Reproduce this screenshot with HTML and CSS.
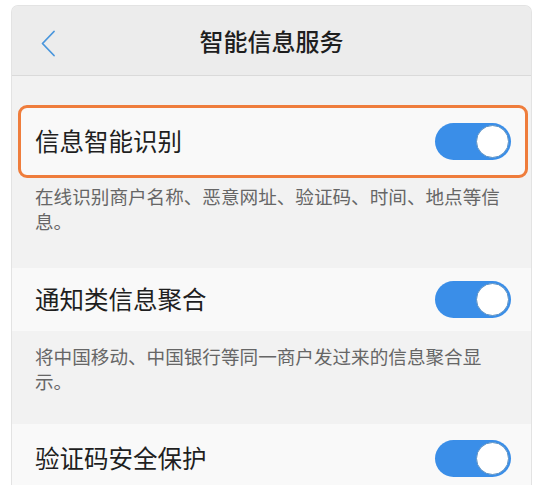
FILE: index.html
```html
<!DOCTYPE html>
<html lang="zh-CN">
<head>
<meta charset="utf-8">
<title>智能信息服务</title>
<link rel="stylesheet" href="styles.css">
</head>
<body>
<div class="card">
  <div class="header">
    <svg class="back" width="16" height="27" viewBox="0 0 16 27"><polyline points="14,1.5 2.5,13.5 14,25.5" fill="none" stroke="#4a96dc" stroke-width="1.8" stroke-linecap="round" stroke-linejoin="round"/></svg>
    <div class="title">智能信息服务</div>
  </div>
  <div class="content">
    <div class="row row-hl">
      <span class="label">信息智能识别</span>
      <span class="toggle"><span class="knob"></span></span>
    </div>
    <div class="desc desc-first">在线识别商户名称、恶意网址、验证码、时间、地点等信息。</div>
    <div class="row">
      <span class="label">通知类信息聚合</span>
      <span class="toggle"><span class="knob"></span></span>
    </div>
    <div class="desc">将中国移动、中国银行等同一商户发过来的信息聚合显示。</div>
    <div class="row row-last">
      <span class="label">验证码安全保护</span>
      <span class="toggle"><span class="knob"></span></span>
    </div>
  </div>
</div>
</body>
</html>
```
FILE: styles.css
```css
html, body {
  margin: 0;
  padding: 0;
  background: #ffffff;
  height: 100%;
  overflow: hidden;
}
body {
  font-family: "Noto Sans CJK SC", "Noto Sans", sans-serif;
  color: #222222;
}
.card {
  margin: 5px 12px 0 11px;
  border: 1px solid #e3e3e3;
  border-bottom: none;
  border-radius: 7px 7px 0 0;
  overflow: hidden;
  height: 500px;
  background: #f2f2f2;
}
.header {
  height: 69px;
  background: #ececec;
  border-bottom: 1px solid #dadada;
  display: flex;
  align-items: center;
  position: relative;
}
.back {
  position: absolute;
  left: 28px;
  top: 24px;
}
.title {
  flex: 1;
  text-align: center;
  font-size: 24px;
  font-weight: 500;
  color: #1e1e1e;
  line-height: 1;
}
.content {
  padding-top: 29px;
}
.row {
  height: 63px;
  background: #f9f9f9;
  display: flex;
  align-items: center;
  justify-content: space-between;
  padding: 0 20px 0 23px;
}
.row-hl {
  height: 67px;
  margin: 0 3px 0 6px;
  border: 3px solid #ef7d3c;
  border-radius: 9px;
  padding: 0 14px 0 14px;
}
.row-last {
  height: 68px;
}
.label {
  font-size: 24.5px;
  line-height: 1;
  color: #1f1f1f;
}
.desc {
  font-size: 18.6px;
  line-height: 25px;
  color: #666666;
  padding: 12px 20px 31px 23px;
}
.desc-first {
  padding-top: 5px;
  padding-bottom: 35px;
}
.toggle {
  width: 76px;
  height: 37px;
  border-radius: 19px;
  background: #3a8ee8;
  display: flex;
  align-items: center;
  justify-content: flex-end;
  padding-right: 2px;
  box-sizing: border-box;
}
.knob {
  width: 33px;
  height: 33px;
  border-radius: 50%;
  background: #ffffff;
  border: 1px solid #5f93c4;
  box-sizing: border-box;
}
```
